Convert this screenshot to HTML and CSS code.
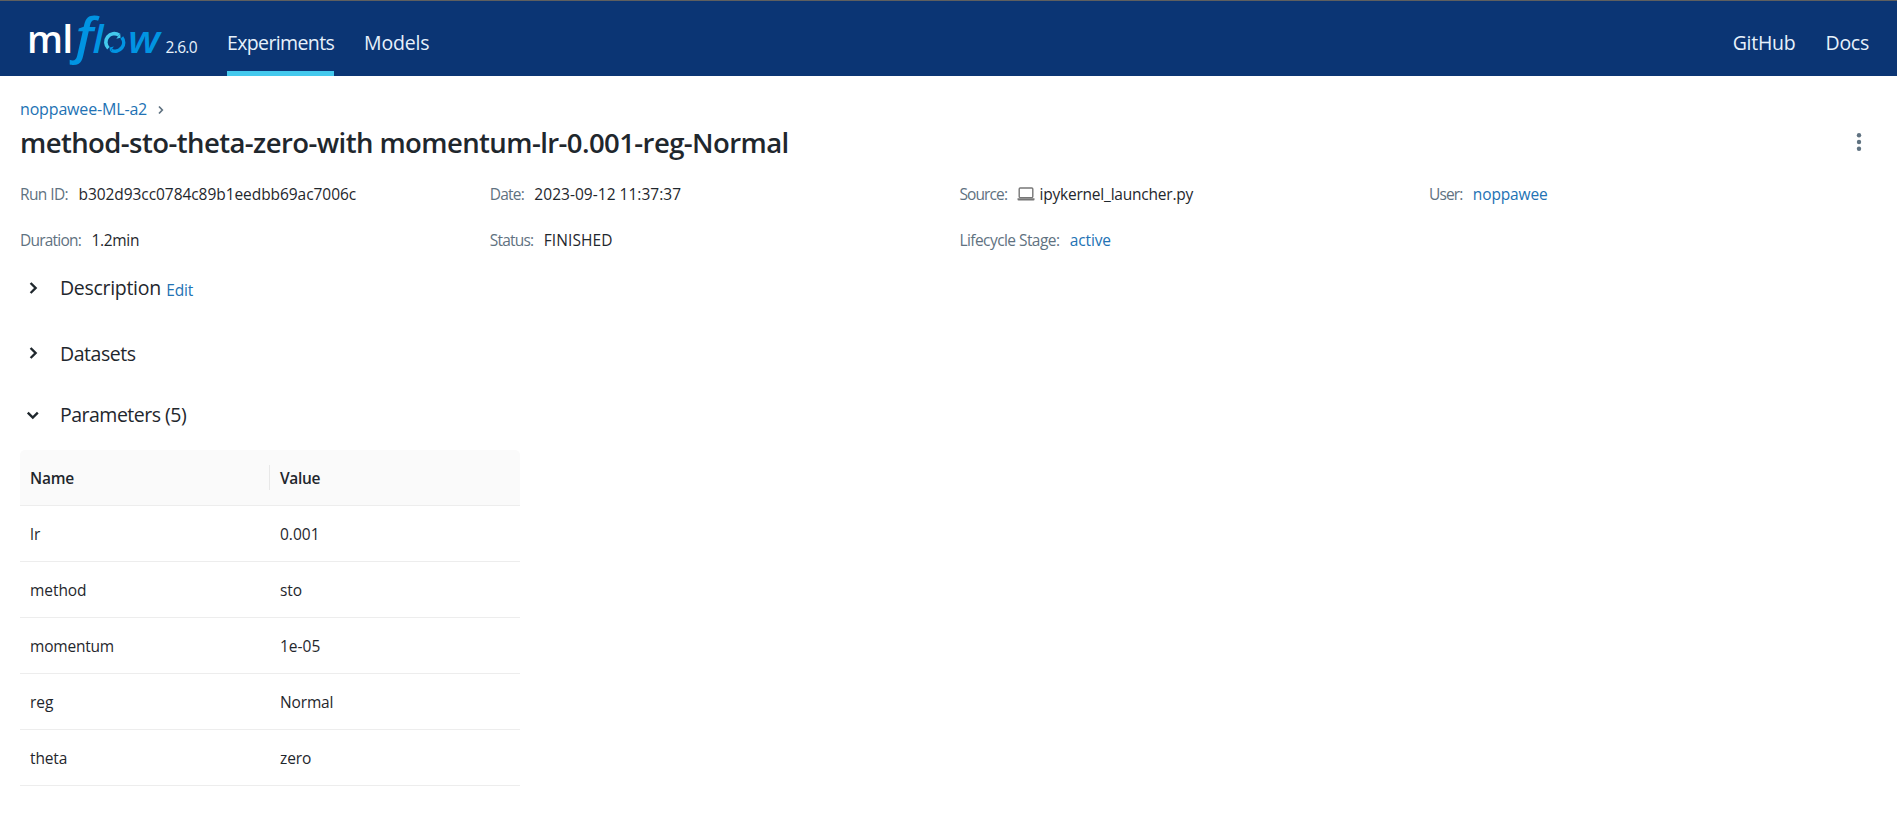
FILE: index.html
```
<!DOCTYPE html>
<html lang="en">
<head>
<meta charset="utf-8">
<title>MLflow</title>
<link rel="stylesheet" href="styles.css">
</head>
<body>
<header class="header">
  <svg class="logo" width="136" height="75" viewBox="26 1 136 75" role="img" aria-label="mlflow">
    <text class="logo-ml" x="27" y="52.7" textLength="36" lengthAdjust="spacingAndGlyphs">m</text>
    <text class="logo-ml" x="62.2" y="52.7" textLength="11" lengthAdjust="spacingAndGlyphs">l</text>
    <text class="logo-f" x="75.5" y="52.5" textLength="18" lengthAdjust="spacingAndGlyphs">f</text>
    <text class="logo-flow" x="92.5" y="52.7" textLength="11" lengthAdjust="spacingAndGlyphs">l</text>
    <g fill="none" stroke-width="3.6">
      <path stroke="#43c9ed" d="M108.4 48.2A8.5 8.5 0 0 1 119 35"/>
      <path stroke="#0194e2" d="M121.8 37.4A8.5 8.5 0 0 1 111.4 50.3"/>
    </g>
    <path fill="#43c9ed" d="M116.3 38.8 120.6 37.8 120.2 33.4z"/>
    <path fill="#0194e2" d="M113.9 46.6 109.6 47.4 110 51.8z"/>
    <text class="logo-flow" x="128" y="52.7" textLength="32" lengthAdjust="spacingAndGlyphs">w</text>
  </svg>
  <span class="version">2.6.0</span>
  <nav class="nav">
    <a class="nav-item nav-experiments">Experiments</a>
    <a class="nav-item nav-models">Models</a>
  </nav>
  <nav class="nav nav-right">
    <a class="nav-item nav-github">GitHub</a>
    <a class="nav-item nav-docs">Docs</a>
  </nav>
</header>
<main class="content">
  <div class="breadcrumb"><a class="link">noppawee-ML-a2</a>
    <svg width="6" height="10" viewBox="0 0 6 10"><path d="M1 1.5 4.3 5 1 8.5" fill="none" stroke="#5f7281" stroke-width="1.7"/></svg>
  </div>
  <div class="title-row">
    <h1 class="title">method-sto-theta-zero-with momentum-lr-0.001-reg-Normal</h1>
    <svg class="kebab" width="6" height="20" viewBox="0 0 6 20" fill="#5f7281"><circle cx="3" cy="3.3" r="2.2"/><circle cx="3" cy="10" r="2.2"/><circle cx="3" cy="16.7" r="2.2"/></svg>
  </div>
  <div class="meta">
    <div class="meta-item"><span class="label t-60">Run ID:</span><span class="t-06">b302d93cc0784c89b1eedbb69ac7006c</span></div>
    <div class="meta-item"><span class="label t-75">Date:</span><span class="t-date">2023-09-12 11:37:37</span></div>
    <div class="meta-item"><span class="label t-87">Source:</span><span class="source"><svg width="18" height="14" viewBox="0 0 18 14"><rect x="2.2" y="1" width="13.6" height="9.6" rx="1" fill="none" stroke="#777" stroke-width="1.4"/><path d="M.5 11.2h17v1.5q0 .8-1 .8h-15q-1 0-1-.8z" fill="#777"/></svg><span class="t-21">ipykernel_launcher.py</span></span></div>
    <div class="meta-item"><span class="label t-87">User:</span><a class="link t-12">noppawee</a></div>
    <div class="meta-item"><span class="label t-75">Duration:</span><span class="t-25">1.2min</span></div>
    <div class="meta-item"><span class="label t-75">Status:</span><span class="t-wide">FINISHED</span></div>
    <div class="meta-item"><span class="label t-55">Lifecycle Stage:</span><a class="link t-12">active</a></div>
  </div>
  <section class="section">
    <svg class="chevron" width="14" height="14" viewBox="0 0 14 14"><path d="m4.6 2 5 5-5 5"/></svg>
    <h2 class="heading h-description">Description</h2><a class="link edit t-12">Edit</a>
  </section>
  <section class="section section-datasets">
    <svg class="chevron raised" width="14" height="14" viewBox="0 0 14 14"><path d="m4.6 2 5 5-5 5"/></svg>
    <h2 class="heading h-datasets">Datasets</h2>
  </section>
  <section class="section section-parameters">
    <svg class="chevron" width="14" height="14" viewBox="0 0 14 14"><path d="m1.8 4.6 5 5 5-5"/></svg>
    <h2 class="heading h-parameters">Parameters (5)</h2>
  </section>
  <div class="table">
    <div class="row head"><div class="cell name">Name</div><div class="cell t-25">Value</div></div>
    <div class="row"><div class="cell">lr</div><div class="cell">0.001</div></div>
    <div class="row"><div class="cell t-06">method</div><div class="cell t-06">sto</div></div>
    <div class="row"><div class="cell t-21">momentum</div><div class="cell">1e-05</div></div>
    <div class="row"><div class="cell">reg</div><div class="cell t-12">Normal</div></div>
    <div class="row"><div class="cell t-12">theta</div><div class="cell t-12">zero</div></div>
  </div>
</main>
</body>
</html>
```
FILE: styles.css
```
* { box-sizing: border-box; }
body {
  margin: 0;
  background: #fff;
  color: #1f272d;
  font: 15.5px/24px "Open Sans", "Noto Sans", sans-serif;
  overflow: hidden;
}
.header {
  display: flex;
  height: 76px;
  border-top: 1px solid #5f5f5f;
  background: #0b3574;
  color: #e7f1fb;
  padding: 0 28px 0 26px;
}
.logo { flex: none; overflow: visible; }
.logo-ml { font: 600 38.5px "Open Sans", sans-serif; fill: #fff; }
.logo-f { font: italic 600 48.5px "Open Sans", sans-serif; fill: #0194e2; }
.logo-flow { font: italic 600 38px "Open Sans", sans-serif; fill: #0194e2; }
.version { width: 65px; padding: 34px 0 0 3.5px; letter-spacing: -0.65px; }
.nav { display: flex; gap: 30px; }
.nav-right { margin-left: auto; }
.nav-item { height: 75px; padding-top: 8px; font-size: 19.5px; line-height: 67px; white-space: nowrap; }
.nav-experiments { width: 107px; letter-spacing: -0.62px; border-bottom: 5px solid #43c9ed; }
.nav-models { letter-spacing: -0.15px; }
.nav-github { letter-spacing: -0.25px; }
.nav-docs { letter-spacing: -0.25px; }
.content { padding: 21px 20px 0; }
.link { color: #2272b4; }
.breadcrumb { display: flex; align-items: center; gap: 10.5px; font-size: 16px; letter-spacing: -0.16px; }
.breadcrumb svg { margin-top: 2px; }
.title-row { display: flex; align-items: center; justify-content: space-between; height: 36px; margin-top: 4px; }
.title { margin: 0; font-size: 27.5px; font-weight: 600; line-height: 36px; letter-spacing: -0.58px; }
.kebab { margin: 0 15px 2px 0; }
.meta { display: grid; grid-template-columns: repeat(4, 469.7px); grid-auto-rows: 46px; margin: 10px -23px 0 0; }
.meta-item { display: flex; align-items: center; gap: 10.4px; }
.label { color: #5f7281; }
.source { display: flex; align-items: center; gap: 4px; }
.section { display: flex; align-items: center; height: 50px; padding-left: 6px; }
.section-datasets { margin-top: 16px; }
.section-parameters { margin-top: 11px; }
.chevron { margin-right: 20px; fill: none; stroke: #1f272d; stroke-width: 2.4; }
.raised { margin-bottom: 3px; }
.heading { margin: 0; font-size: 19.5px; font-weight: 400; line-height: 26px; }
.h-description { letter-spacing: -0.3px; }
.h-datasets { letter-spacing: -0.46px; }
.h-parameters { letter-spacing: -0.5px; }
.edit { margin: 3px 0 0 5.4px; }
.table { width: 500px; margin-top: 10px; }
.row { display: grid; grid-template-columns: 1fr 1fr; align-items: center; height: 56px; border-bottom: 1px solid #ededed; }
.head { background: #fafafa; font-weight: 600; border-radius: 5px 5px 0 0; }
.cell { padding: 1px 10px 0; }
.name { border-right: 1px solid #e8e8e8; letter-spacing: -0.2px; }
.t-06 { letter-spacing: -0.06px; }
.t-12 { letter-spacing: -0.14px; }
.t-21 { letter-spacing: -0.21px; }
.t-25 { letter-spacing: -0.3px; }
.t-55 { letter-spacing: -0.56px; }
.t-60 { letter-spacing: -0.6px; }
.t-75 { letter-spacing: -0.78px; }
.t-87 { letter-spacing: -0.88px; }
.t-date { letter-spacing: 0.03px; }
.t-wide { letter-spacing: 0.1px; }
```
